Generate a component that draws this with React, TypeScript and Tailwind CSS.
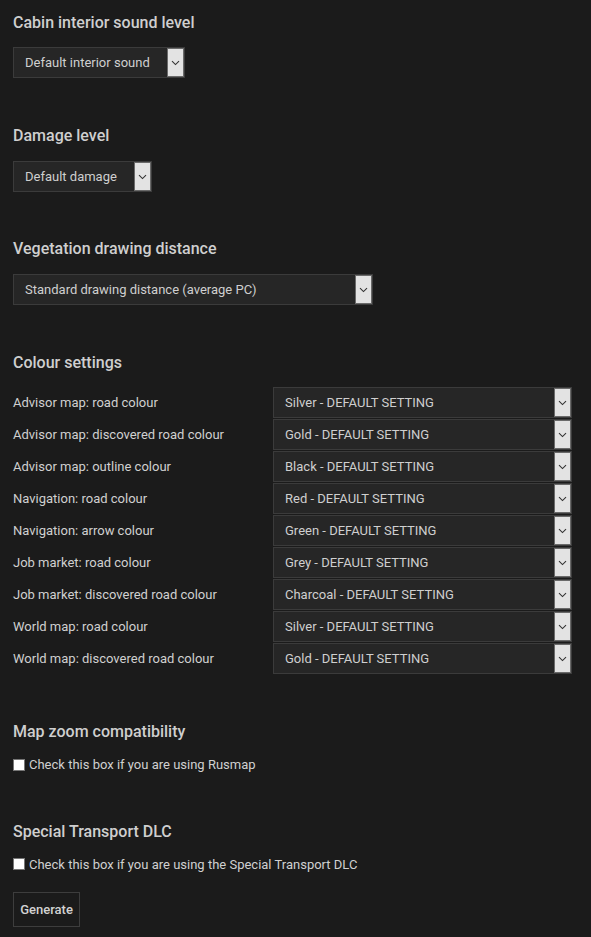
import React from "react";

const Chevron = () => (
  <svg width="9" height="6" viewBox="0 0 9 6" fill="none">
    <path d="M1 1.2 L4.5 4.6 L8 1.2" stroke="#333" strokeWidth="1.1" />
  </svg>
);

function Select({ text, width }: { text: string; width: string }) {
  return (
    <div
      className={`flex h-[31px] items-stretch border border-[#3b3b3b] bg-[#262626] ${width}`}
    >
      <div className="flex flex-1 items-center pl-[11px] text-[13px] text-[#cfcfcf]">
        {text}
      </div>
      <div className="flex w-[17px] items-center justify-center border border-[#6a6a6a] bg-[#e3e3e3]">
        <Chevron />
      </div>
    </div>
  );
}

const rows: [string, string][] = [
  ["Advisor map: road colour", "Silver - DEFAULT SETTING"],
  ["Advisor map: discovered road colour", "Gold - DEFAULT SETTING"],
  ["Advisor map: outline colour", "Black - DEFAULT SETTING"],
  ["Navigation: road colour", "Red - DEFAULT SETTING"],
  ["Navigation: arrow colour", "Green - DEFAULT SETTING"],
  ["Job market: road colour", "Grey - DEFAULT SETTING"],
  ["Job market: discovered road colour", "Charcoal - DEFAULT SETTING"],
  ["World map: road colour", "Silver - DEFAULT SETTING"],
  ["World map: discovered road colour", "Gold - DEFAULT SETTING"],
];

function Heading({ children }: { children: React.ReactNode }) {
  return (
    <h2 className="h-[24px] text-[16px] leading-[24px] font-medium text-[#cfcfcf]">
      {children}
    </h2>
  );
}

function Check({ label }: { label: string }) {
  return (
    <label className="flex items-center gap-[4px] text-[13px] text-[#d0d0d0]">
      <span className="block h-[12px] w-[12px] border border-[#777] bg-white" />
      {label}
    </label>
  );
}

export default function App() {
  return (
    <div
      className="min-h-[937px] w-[591px] bg-[#1b1b1b] px-[13px] pt-[11px]"
      style={{ fontFamily: "Roboto, 'Liberation Sans', sans-serif" }}
    >
      <Heading>Cabin interior sound level</Heading>
      <div className="mt-[12px]">
        <Select text="Default interior sound" width="w-[172px]" />
      </div>

      <div className="mt-[46px]">
        <Heading>Damage level</Heading>
      </div>
      <div className="mt-[13px]">
        <Select text="Default damage" width="w-[139px]" />
      </div>

      <div className="mt-[45px]">
        <Heading>Vegetation drawing distance</Heading>
      </div>
      <div className="mt-[13px]">
        <Select text="Standard drawing distance (average PC)" width="w-[360px]" />
      </div>

      <div className="mt-[46px]">
        <Heading>Colour settings</Heading>
      </div>
      <div className="mt-[12px] flex flex-col gap-[1px]">
        {rows.map(([label, value], i) => (
          <div key={i} className="flex items-center">
            <div className="w-[260px] text-[13px] text-[#d0d0d0]">{label}</div>
            <Select text={value} width="w-[299px]" />
          </div>
        ))}
      </div>

      <div className="mt-[46px]">
        <Heading>Map zoom compatibility</Heading>
      </div>
      <div className="mt-[11px]">
        <Check label="Check this box if you are using Rusmap" />
      </div>

      <div className="mt-[45px]">
        <Heading>Special Transport DLC</Heading>
      </div>
      <div className="mt-[11px]">
        <Check label="Check this box if you are using the Special Transport DLC" />
      </div>

      <button className="mt-[18px] h-[35px] w-[67px] border border-[#3d3d3d] bg-[#1b1b1b] text-[13px] font-medium text-[#d2d2d2]">
        Generate
      </button>
    </div>
  );
}
